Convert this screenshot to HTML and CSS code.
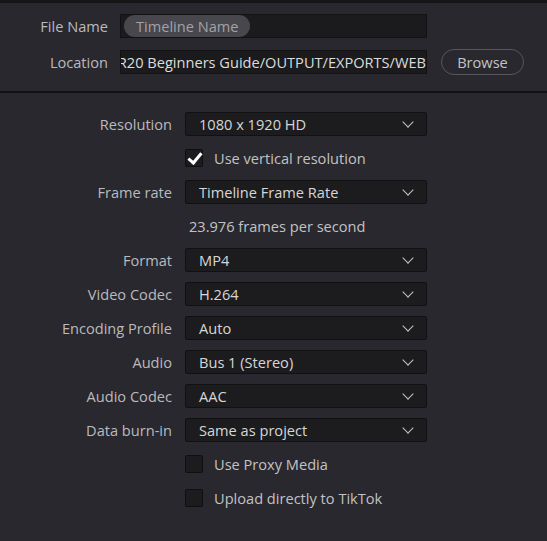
FILE: index.html
```html
<!doctype html>
<html>
<head>
 <meta http-equiv="Content-Type" content="text/html; charset=utf-8">
 <title>Render Settings</title>
 <link rel="stylesheet" href="styles.css">
</head>

<body>
  <div class="topbar"></div>

  <!-- file name / location -->
  <div class="target">
    <label class="lbl">File Name</label>
    <div class="field"><span class="pill">Timeline Name</span></div>
    <div></div>

    <label class="lbl">Location</label>
    <div class="field path"><span>R20 Beginners Guide/OUTPUT/EXPORTS/WEB</span></div>
    <button class="browse">Browse</button>
  </div>

  <div class="divider"></div>

  <!-- video / audio options -->
  <div class="settings">
    <label class="lbl">Resolution</label>
    <div class="select"><span>1080 x 1920 HD</span><i class="chev"></i></div>

    <div></div>
    <div class="check"><span class="box on"></span>Use vertical resolution</div>

    <label class="lbl">Frame rate</label>
    <div class="select"><span>Timeline Frame Rate</span><i class="chev"></i></div>

    <div></div>
    <div class="note">23.976 frames per second</div>

    <label class="lbl">Format</label>
    <div class="select"><span>MP4</span><i class="chev"></i></div>

    <label class="lbl">Video Codec</label>
    <div class="select"><span>H.264</span><i class="chev"></i></div>

    <label class="lbl">Encoding Profile</label>
    <div class="select"><span>Auto</span><i class="chev"></i></div>

    <label class="lbl">Audio</label>
    <div class="select"><span>Bus 1 (Stereo)</span><i class="chev"></i></div>

    <label class="lbl">Audio Codec</label>
    <div class="select"><span>AAC</span><i class="chev"></i></div>

    <label class="lbl">Data burn-in</label>
    <div class="select"><span>Same as project</span><i class="chev"></i></div>

    <div></div>
    <div class="check"><span class="box"></span>Use Proxy Media</div>

    <div></div>
    <div class="check"><span class="box"></span>Upload directly to TikTok</div>
  </div>
</body>
</html>
```

FILE: styles.css
```css
html,body{margin:0;padding:0;background-color:#28282e;height:100%;}
body{font-family:'Open Sans','Noto Sans',sans-serif;font-size:14.6px;color:#bababe;overflow:hidden;}
.topbar{height:3px;background-color:#161619;}

.target{display:grid;grid-template-columns:108px 307px 83px;grid-auto-rows:24px;column-gap:12px;row-gap:12px;padding:11px 0 17px 0;align-items:center;}
.target .browse{margin-left:2px;}
.lbl{text-align:right;white-space:nowrap;line-height:24px;}
.field{height:24px;box-sizing:border-box;background-color:#1b1b1e;border:1px solid #121214;display:flex;align-items:center;overflow:hidden;}
.field .pill{height:22px;line-height:22px;padding:0 11px 0 12px;margin-left:3px;border-radius:11px;background-color:#47474d;color:#a2a2a7;}
.field.path{justify-content:flex-end;color:#dcdcdc;}
.field.path span{white-space:nowrap;}
.browse{height:26px;width:83px;box-sizing:border-box;border:1px solid #56565c;border-radius:13px;background:transparent;color:#c4c4c6;font-family:inherit;font-size:14.6px;padding:0;}

.divider{height:2px;background-color:#111114;}

.settings{display:grid;grid-template-columns:172px 242px;grid-auto-rows:24px;column-gap:13px;row-gap:10px;padding-top:19px;}
.select{height:24px;box-sizing:border-box;background-color:#1c1c1f;border:1px solid #111113;border-radius:2px;display:flex;align-items:center;justify-content:space-between;padding:0 12px 0 13px;color:#d6d6d6;}
.chev{width:7px;height:7px;border-right:1.6px solid #c4c4c4;border-bottom:1.6px solid #c4c4c4;transform:rotate(45deg);margin:0 2px 4px 0;}
.note{height:24px;line-height:24px;padding-left:4px;color:#c2c2c4;}
.check{height:24px;display:flex;align-items:center;color:#c2c2c4;}
.box{width:18px;height:18px;box-sizing:border-box;background-color:#1c1c1f;border:1px solid #0f0f11;border-radius:2px;margin-right:11px;position:relative;}
.box.on::after{content:'';position:absolute;left:5px;top:0px;width:5px;height:11px;border-right:3px solid #ffffff;border-bottom:3px solid #ffffff;transform:rotate(40deg);}
```
